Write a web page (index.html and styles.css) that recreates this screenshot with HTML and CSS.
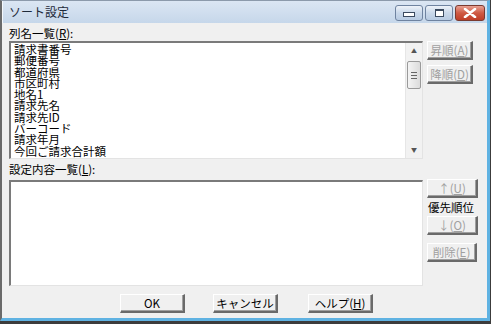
FILE: index.html
```html
<!DOCTYPE html>
<html lang="ja">
<head>
    <meta charset="UTF-8">
    <title>ソート設定</title>
    <link rel="stylesheet" href="styles.css">
</head>
<body>
    <div class="window">
        <div class="title-bar">
            <span class="title">ソート設定</span>
            <div class="caption-buttons">
                <span class="cap-btn"><span class="min-glyph"></span></span>
                <span class="cap-btn"><span class="max-glyph"></span></span>
                <span class="cap-btn close">
                    <svg width="14" height="10" viewBox="0 0 14 10"><path d="M2 1 L12 9 M12 1 L2 9" stroke="#fff" stroke-width="2.6" stroke-linecap="round"/></svg>
                </span>
            </div>
        </div>

        <div class="content">
            <div class="main">
                <div class="left-col">
                    <label class="field-label">列名一覧(<u>R</u>):</label>
                    <div class="listbox columns-list">
                        <ul class="items">
                            <li>請求書番号</li>
                            <li>郵便番号</li>
                            <li>都道府県</li>
                            <li>市区町村</li>
                            <li>地名1</li>
                            <li>請求先名</li>
                            <li>請求先ID</li>
                            <li>バーコード</li>
                            <li>請求年月</li>
                            <li>今回ご請求合計額</li>
                        </ul>
                        <div class="scrollbar">
                            <span class="arrow">&#9650;</span>
                            <span class="thumb"><span class="grip"></span></span>
                            <span class="track"></span>
                            <span class="arrow">&#9660;</span>
                        </div>
                    </div>

                    <label class="field-label second">設定内容一覧(<u>L</u>):</label>
                    <div class="listbox settings-list"></div>
                </div>

                <div class="right-col">
                    <button class="btn disabled sort-btn">昇順(<u>A</u>)</button>
                    <button class="btn disabled sort-btn">降順(<u>D</u>)</button>

                    <div class="priority">
                        <button class="btn disabled prio-btn">↑(<u>U</u>)</button>
                        <span class="prio-label">優先順位</span>
                        <button class="btn disabled prio-btn">↓(<u>O</u>)</button>
                        <button class="btn disabled prio-btn delete-btn">削除(<u>E</u>)</button>
                    </div>
                </div>
            </div>

            <div class="footer">
                <button class="btn ok-btn">OK</button>
                <button class="btn">キャンセル</button>
                <button class="btn">ヘルプ(<u>H</u>)</button>
            </div>
        </div>
    </div>
</body>
</html>
```

FILE: styles.css
```css
body {
    margin: 0;
    width: 491px;
    height: 324px;
    background: #3c3c3c;
    font-family: "Noto Sans CJK JP", "Liberation Sans", sans-serif;
    font-size: 11.5px;
    color: #000;
    overflow: hidden;
}

.window {
    width: 490px;
    height: 321px;
    box-sizing: border-box;
    border-left: 2px solid #6a6a6a;
    border-top: 1px solid #8c9aab;
    border-right: 3px solid #5fb2e2;
    border-bottom: 3px solid #5fb2e2;
    background: #f0f0f0;
    display: flex;
    flex-direction: column;
}

.title-bar {
    height: 22px;
    display: flex;
    align-items: center;
    justify-content: space-between;
    padding: 0 2px 0 6px;
    background: linear-gradient(#dbe6f3, #c6d7ea);
    border-left: 1px solid #f4f8fc;
}

.title {
    font-size: 12px;
    line-height: 14px;
    color: #1e2a3a;
}

.caption-buttons {
    display: flex;
    gap: 2px;
    margin-top: 1px;
}

.cap-btn {
    width: 26px;
    height: 14px;
    border: 1px solid #6f83a0;
    border-radius: 3px;
    background: linear-gradient(#eef3f9, #c9d8ea 50%, #b8cbe2);
    display: flex;
    align-items: center;
    justify-content: center;
}

.cap-btn.close {
    width: 28px;
    border-color: #7a3a30;
    background: linear-gradient(#e8a193, #cf5a44 50%, #bf3e28);
}

.min-glyph {
    width: 10px;
    height: 3px;
    margin-top: 3px;
    background: #fff;
    border: 1px solid #3b4a5f;
}

.max-glyph {
    width: 7px;
    height: 5px;
    border: 1px solid #3b4a5f;
    border-top-width: 2px;
    background: #fff;
}

.content {
    flex: 1;
    padding: 4px 0 0 7px;
    display: flex;
    flex-direction: column;
}

.main {
    display: flex;
    gap: 4px;
}

.left-col {
    width: 414px;
    display: flex;
    flex-direction: column;
}

.field-label {
    line-height: 13px;
    height: 13px;
}

.field-label.second {
    margin-top: 4px;
}

.listbox {
    box-sizing: border-box;
    background: #fff;
    border-top: 2px solid #7a7a7a;
    border-left: 2px solid #7a7a7a;
    border-right: 1px solid #e3e3e3;
    border-bottom: 1px solid #e3e3e3;
    margin-top: 1px;
}

.columns-list {
    height: 118px;
    display: flex;
}

.settings-list {
    height: 106px;
    margin-top: 4px;
}

.items {
    flex: 1;
    list-style: none;
    margin: 0;
    padding: 1px 0 0 3px;
}

.items li {
    line-height: 11.3px;
    height: 11.3px;
}

.scrollbar {
    width: 16px;
    display: flex;
    flex-direction: column;
    background: #f2f2f2;
    border-left: 1px solid #e6e6e6;
}

.arrow {
    height: 16px;
    font-size: 6px;
    line-height: 16px;
    text-align: center;
    color: #555;
}

.thumb {
    height: 28px;
    margin: 2px 1px 0;
    box-sizing: border-box;
    border: 1px solid #9a9a9a;
    border-radius: 2px;
    background: linear-gradient(90deg, #f4f4f4, #dcdcdc);
    display: flex;
    align-items: center;
    justify-content: center;
}

.grip {
    width: 6px;
    height: 5px;
    border-top: 1px solid #666;
    border-bottom: 1px solid #666;
    position: relative;
}

.grip::after {
    content: "";
    display: block;
    margin-top: 2px;
    border-top: 1px solid #666;
}

.track {
    flex: 1;
}

.right-col {
    display: flex;
    flex-direction: column;
    align-items: flex-start;
}

.btn {
    font-family: inherit;
    font-size: 11.5px;
    line-height: 13px;
    height: 19px;
    padding: 0;
    box-sizing: border-box;
    background: #f0f0f0;
    color: #000;
    border-top: 1px solid #fff;
    border-left: 1px solid #fff;
    border-right: 2px solid #6a6a6a;
    border-bottom: 2px solid #6a6a6a;
    box-shadow: inset -1px -1px 0 #a0a0a0;
}

.btn.disabled {
    color: #a0a0a0;
}

.sort-btn {
    width: 46px;
    margin-top: 14px;
}

.sort-btn + .sort-btn {
    margin-top: 5px;
}

.priority {
    margin-top: 95px;
    display: flex;
    flex-direction: column;
    align-items: flex-start;
}

.prio-btn {
    width: 51px;
}

.prio-label {
    line-height: 13px;
    margin: 3px 0 2px 1px;
}

.delete-btn {
    margin-top: 8px;
    width: 50px;
}

.footer {
    display: flex;
    margin-top: 8px;
    padding-left: 111px;
    gap: 28px;
}

.footer .btn {
    width: 65px;
}

.footer .btn + .btn + .btn {
    margin-left: 2px;
}
```
